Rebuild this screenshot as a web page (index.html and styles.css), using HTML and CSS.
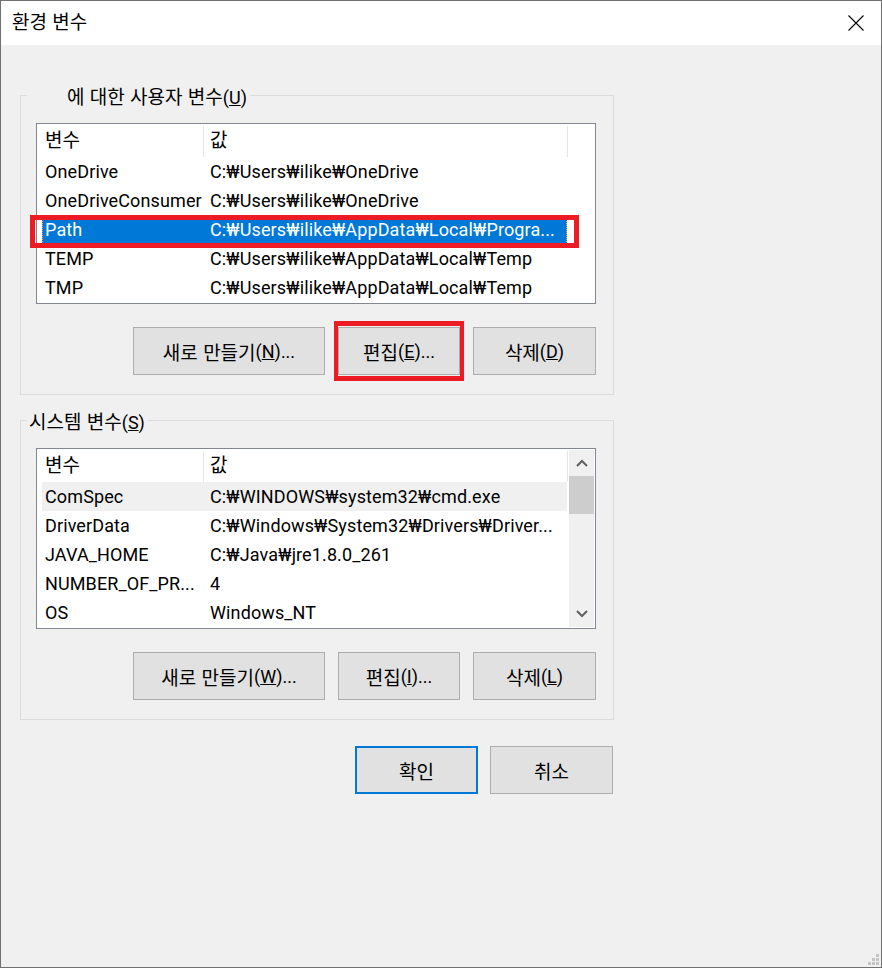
FILE: index.html
```html
<!DOCTYPE html>
<html lang="ko">
<head>
<meta charset="utf-8">
<title>환경 변수</title>
<link rel="stylesheet" href="styles.css">
</head>
<body>
<div class="window">
  <div class="titlebar">
    <span class="title"><span class="k">환경 변수</span></span>
    <svg class="close" width="16" height="16" viewBox="0 0 16 16"><path d="M0.5 0.5 L15.5 15.5 M15.5 0.5 L0.5 15.5" stroke="#000" stroke-width="1.1" fill="none"/></svg>
  </div>
  <div class="content">
    <div class="group">
      <div class="group-label user-label"><span class="k">에 대한 사용자 변수</span>(<u>U</u>)</div>
      <div class="list">
        <div class="list-body">
          <div class="list-header">
            <div class="hcell h1"><span class="k">변수</span></div><div class="hsep"></div><div class="hcell h2"><span class="k">값</span></div><div class="hsep"></div>
          </div>
          <div class="row"><div class="c1">OneDrive</div><div class="c2">C:₩Users₩ilike₩OneDrive</div></div>
          <div class="row"><div class="c1">OneDriveConsumer</div><div class="c2">C:₩Users₩ilike₩OneDrive</div></div>
          <div class="row selected"><div class="c1">Path</div><div class="c2">C:₩Users₩ilike₩AppData₩Local₩Progra...</div></div>
          <div class="row"><div class="c1">TEMP</div><div class="c2">C:₩Users₩ilike₩AppData₩Local₩Temp</div></div>
          <div class="row"><div class="c1">TMP</div><div class="c2">C:₩Users₩ilike₩AppData₩Local₩Temp</div></div>
        </div>
        <div class="mark-row"></div>
      </div>
      <div class="buttons">
        <button class="btn btn-new"><span class="k">새로 만들기</span>(<u>N</u>)...</button>
        <div class="edit-wrap">
          <button class="btn btn-edit"><span class="k">편집</span>(<u>E</u>)...</button>
          <div class="mark-btn"></div>
        </div>
        <button class="btn btn-del"><span class="k">삭제</span>(<u>D</u>)</button>
      </div>
    </div>

    <div class="group group-sys">
      <div class="group-label"><span class="k">시스템 변수</span>(<u>S</u>)</div>
      <div class="list">
        <div class="list-body">
          <div class="list-header">
            <div class="hcell h1"><span class="k">변수</span></div><div class="hsep"></div><div class="hcell h2"><span class="k">값</span></div><div class="hsep"></div>
          </div>
          <div class="row inactive"><div class="c1">ComSpec</div><div class="c2">C:₩WINDOWS₩system32₩cmd.exe</div></div>
          <div class="row"><div class="c1">DriverData</div><div class="c2">C:₩Windows₩System32₩Drivers₩Driver...</div></div>
          <div class="row"><div class="c1">JAVA_HOME</div><div class="c2">C:₩Java₩jre1.8.0_261</div></div>
          <div class="row"><div class="c1">NUMBER_OF_PR...</div><div class="c2">4</div></div>
          <div class="row"><div class="c1">OS</div><div class="c2">Windows_NT</div></div>
        </div>
        <div class="scrollbar">
          <div class="sb-btn"><svg width="12" height="8" viewBox="0 0 12 8"><polyline points="1,7 6,2 11,7" fill="none" stroke="#606060" stroke-width="2"/></svg></div>
          <div class="sb-thumb"></div>
          <div class="sb-track"></div>
          <div class="sb-btn"><svg width="12" height="8" viewBox="0 0 12 8"><polyline points="1,1 6,6 11,1" fill="none" stroke="#606060" stroke-width="2"/></svg></div>
        </div>
      </div>
      <div class="buttons">
        <button class="btn btn-new"><span class="k">새로 만들기</span>(<u>W</u>)...</button>
        <button class="btn btn-edit"><span class="k">편집</span>(<u>I</u>)...</button>
        <button class="btn btn-del"><span class="k">삭제</span>(<u>L</u>)</button>
      </div>
    </div>

    <div class="footer">
      <button class="btn btn-ok"><span class="k">확인</span></button>
      <button class="btn btn-cancel"><span class="k">취소</span></button>
    </div>
  </div>
  <svg class="grip" width="11" height="11" viewBox="0 0 11 11">
    <rect x="8" y="0" width="3" height="3" fill="#c4c4c4"/>
    <rect x="4" y="4" width="3" height="3" fill="#c4c4c4"/>
    <rect x="8" y="4" width="3" height="3" fill="#c4c4c4"/>
    <rect x="0" y="8" width="3" height="3" fill="#c4c4c4"/>
    <rect x="4" y="8" width="3" height="3" fill="#c4c4c4"/>
    <rect x="8" y="8" width="3" height="3" fill="#c4c4c4"/>
  </svg>
</div>
</body>
</html>
```
FILE: styles.css
```css
* { box-sizing: border-box; }
html, body { margin: 0; padding: 0; background: #f0f0f0; }
body {
  font-family: Roboto, "Noto Sans CJK KR", sans-serif;
  font-size: 18px;
  color: #000;
}
.k {
  font-family: "Noto Sans CJK KR", sans-serif;
  font-size: 19px;
  line-height: 1;
}
.window {
  position: relative;
  width: 882px;
  height: 968px;
  border: 1px solid #707070;
  background: #f0f0f0;
  overflow: hidden;
}
.titlebar {
  height: 44px;
  background: #fff;
  display: flex;
  align-items: center;
  justify-content: space-between;
  padding: 0 17px 0 11px;
}
.title { line-height: 24px; }
.close { display: block; }

.group {
  margin: 50px 0 0 19px;
  width: 594px;
  border: 1px solid #dcdcdc;
  padding-bottom: 19px;
}
.group-sys { margin-top: 25px; }
.group-label {
  width: max-content;
  height: 24px;
  line-height: 24px;
  margin: -10px 0 0 6px;
  padding: 0 3px 0 2px;
  background: #f0f0f0;
}
.user-label { padding-left: 40px; }

.list {
  position: relative;
  margin: 13px 0 0 15px;
  width: 560px;
  height: 181px;
  border: 1px solid #828790;
  background: #fff;
  display: flex;
}
.list-body { width: 532px; }
.list-header { height: 33px; display: flex; }
.hcell { line-height: 33px; white-space: nowrap; }
.h1 { width: 166px; padding-left: 8px; }
.h2 { width: 363px; padding-left: 6px; }
.hsep { width: 1px; margin-top: 2px; background: #e5e5e5; }

.row {
  display: flex;
  height: 29px;
  width: 525px;
  margin-left: 5px;
  line-height: 30px;
  letter-spacing: 0.12px;
  white-space: nowrap;
}
.c1 { width: 162px; padding-left: 3px; overflow: hidden; }
.c2 { padding-left: 6px; overflow: hidden; }
.row.selected {
  background: #0078d7;
  color: #fff;
  outline: 1px dotted #f5a04c;
  outline-offset: -1px;
}
.row.inactive { background: #f0f0f0; }

.mark-row {
  position: absolute;
  left: -7px;
  top: 91px;
  width: 549px;
  height: 33px;
  border: 5px solid #ed1c24;
}

.scrollbar {
  width: 25px;
  margin: 1px 1px 1px 0;
  background: #f0f0f0;
  display: flex;
  flex-direction: column;
}
.sb-btn {
  height: 26px;
  display: flex;
  align-items: center;
  justify-content: center;
}
.sb-btn svg { display: block; }
.sb-thumb { height: 38px; background: #cdcdcd; }
.sb-track { flex: 1; }

.buttons {
  display: flex;
  gap: 13px;
  margin: 23px 0 0 112px;
}
.btn {
  height: 48px;
  margin: 0;
  padding: 0;
  background: #e1e1e1;
  border: 1px solid #adadad;
  font: inherit;
  color: #000;
  display: flex;
  align-items: center;
  justify-content: center;
  white-space: nowrap;
}
.btn-new { width: 192px; }
.btn-edit { width: 122px; }
.btn-del { width: 123px; }
.edit-wrap { position: relative; display: flex; }
.mark-btn {
  position: absolute;
  left: -4px;
  right: -4px;
  top: -6px;
  bottom: -6px;
  border-style: solid;
  border-color: #ed1c24;
  border-width: 5px 4px;
}

.footer {
  display: flex;
  gap: 12px;
  margin: 26px 0 0 354px;
}
.btn-ok { width: 123px; border: 2px solid #0078d7; }
.btn-cancel { width: 123px; }

.grip {
  position: absolute;
  right: 2px;
  bottom: 2px;
  display: block;
}
```
